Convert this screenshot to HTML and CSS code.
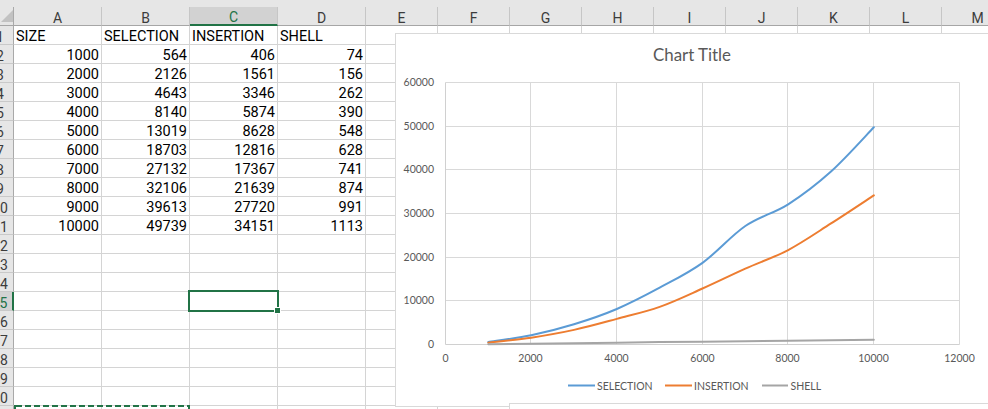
FILE: index.html
```html
<!DOCTYPE html>
<html>
<head>
<meta charset="utf-8">
<link rel="stylesheet" href="styles.css">
</head>
<body>
<div class="app">
  <div class="strip"></div>
  <div class="sheet">
    <div class="row head"><span class="rh corner"><svg class="corner-tri" width="12" height="12" viewBox="0 0 12 12"><polygon points="12,0 12,12 0,12"/></svg></span><span>A</span><span>B</span><span class="colsel">C</span><span>D</span><span>E</span><span>F</span><span>G</span><span>H</span><span>I</span><span>J</span><span>K</span><span>L</span><span>M</span></div>
    <div class="row"><span class="rh">1</span><span>SIZE</span><span>SELECTION</span><span>INSERTION</span><span>SHELL</span><span></span><span></span><span></span><span></span><span></span><span></span><span></span><span></span><span></span></div>
    <div class="row"><span class="rh">2</span><span class="n">1000</span><span class="n">564</span><span class="n">406</span><span class="n">74</span><span></span><span></span><span></span><span></span><span></span><span></span><span></span><span></span><span></span></div>
    <div class="row"><span class="rh">3</span><span class="n">2000</span><span class="n">2126</span><span class="n">1561</span><span class="n">156</span><span></span><span></span><span></span><span></span><span></span><span></span><span></span><span></span><span></span></div>
    <div class="row"><span class="rh">4</span><span class="n">3000</span><span class="n">4643</span><span class="n">3346</span><span class="n">262</span><span></span><span></span><span></span><span></span><span></span><span></span><span></span><span></span><span></span></div>
    <div class="row"><span class="rh">5</span><span class="n">4000</span><span class="n">8140</span><span class="n">5874</span><span class="n">390</span><span></span><span></span><span></span><span></span><span></span><span></span><span></span><span></span><span></span></div>
    <div class="row"><span class="rh">6</span><span class="n">5000</span><span class="n">13019</span><span class="n">8628</span><span class="n">548</span><span></span><span></span><span></span><span></span><span></span><span></span><span></span><span></span><span></span></div>
    <div class="row"><span class="rh">7</span><span class="n">6000</span><span class="n">18703</span><span class="n">12816</span><span class="n">628</span><span></span><span></span><span></span><span></span><span></span><span></span><span></span><span></span><span></span></div>
    <div class="row"><span class="rh">8</span><span class="n">7000</span><span class="n">27132</span><span class="n">17367</span><span class="n">741</span><span></span><span></span><span></span><span></span><span></span><span></span><span></span><span></span><span></span></div>
    <div class="row"><span class="rh">9</span><span class="n">8000</span><span class="n">32106</span><span class="n">21639</span><span class="n">874</span><span></span><span></span><span></span><span></span><span></span><span></span><span></span><span></span><span></span></div>
    <div class="row"><span class="rh">10</span><span class="n">9000</span><span class="n">39613</span><span class="n">27720</span><span class="n">991</span><span></span><span></span><span></span><span></span><span></span><span></span><span></span><span></span><span></span></div>
    <div class="row"><span class="rh">11</span><span class="n">10000</span><span class="n">49739</span><span class="n">34151</span><span class="n">1113</span><span></span><span></span><span></span><span></span><span></span><span></span><span></span><span></span><span></span></div>
    <div class="row"><span class="rh">12</span><span></span><span></span><span></span><span></span><span></span><span></span><span></span><span></span><span></span><span></span><span></span><span></span><span></span></div>
    <div class="row"><span class="rh">13</span><span></span><span></span><span></span><span></span><span></span><span></span><span></span><span></span><span></span><span></span><span></span><span></span><span></span></div>
    <div class="row"><span class="rh">14</span><span></span><span></span><span></span><span></span><span></span><span></span><span></span><span></span><span></span><span></span><span></span><span></span><span></span></div>
    <div class="row"><span class="rh rowsel">15</span><span></span><span></span><span></span><span></span><span></span><span></span><span></span><span></span><span></span><span></span><span></span><span></span><span></span></div>
    <div class="row"><span class="rh">16</span><span></span><span></span><span></span><span></span><span></span><span></span><span></span><span></span><span></span><span></span><span></span><span></span><span></span></div>
    <div class="row"><span class="rh">17</span><span></span><span></span><span></span><span></span><span></span><span></span><span></span><span></span><span></span><span></span><span></span><span></span><span></span></div>
    <div class="row"><span class="rh">18</span><span></span><span></span><span></span><span></span><span></span><span></span><span></span><span></span><span></span><span></span><span></span><span></span><span></span></div>
    <div class="row"><span class="rh">19</span><span></span><span></span><span></span><span></span><span></span><span></span><span></span><span></span><span></span><span></span><span></span><span></span><span></span></div>
    <div class="row"><span class="rh">20</span><span></span><span></span><span></span><span></span><span></span><span></span><span></span><span></span><span></span><span></span><span></span><span></span><span></span></div>
    <div class="row"><span class="rh">21</span><span></span><span></span><span></span><span></span><span></span><span></span><span></span><span></span><span></span><span></span><span></span><span></span><span></span></div>
  </div>

  <div class="cursor"><i class="handle"></i></div>
  <div class="copy"></div>

  <div class="chart">
    <svg class="chart-svg" width="620" height="372" viewBox="0 0 620 372">
      <text class="title" x="296" y="27" text-anchor="middle">Chart Title</text>
      <g class="gridlines">
        <line x1="49.5" x2="563.5" y1="48.5" y2="48.5"/>
        <line x1="49.5" x2="563.5" y1="92.5" y2="92.5"/>
        <line x1="49.5" x2="563.5" y1="135.5" y2="135.5"/>
        <line x1="49.5" x2="563.5" y1="179.5" y2="179.5"/>
        <line x1="49.5" x2="563.5" y1="223.5" y2="223.5"/>
        <line x1="49.5" x2="563.5" y1="266.5" y2="266.5"/>
        <line x1="134.5" x2="134.5" y1="48.5" y2="310.5"/>
        <line x1="220.5" x2="220.5" y1="48.5" y2="310.5"/>
        <line x1="306.5" x2="306.5" y1="48.5" y2="310.5"/>
        <line x1="391.5" x2="391.5" y1="48.5" y2="310.5"/>
        <line x1="477.5" x2="477.5" y1="48.5" y2="310.5"/>
        <line x1="563.5" x2="563.5" y1="48.5" y2="310.5"/>
      </g>
      <g class="axes">
        <line x1="49.5" x2="49.5" y1="48.5" y2="310.5"/>
        <line x1="49.5" x2="563.5" y1="310.5" y2="310.5"/>
      </g>
      <g class="ylabels" text-anchor="end">
        <text x="38" y="52.3">60000</text>
        <text x="38" y="96.3">50000</text>
        <text x="38" y="139.3">40000</text>
        <text x="38" y="183.3">30000</text>
        <text x="38" y="227.3">20000</text>
        <text x="38" y="270.3">10000</text>
        <text x="38" y="314.3">0</text>
      </g>
      <g class="xlabels" text-anchor="middle">
        <text x="49.5" y="328">0</text>
        <text x="134.5" y="328">2000</text>
        <text x="220.5" y="328">4000</text>
        <text x="306.5" y="328">6000</text>
        <text x="391.5" y="328">8000</text>
        <text x="477.5" y="328">10000</text>
        <text x="563.5" y="328">12000</text>
      </g>
      <svg x="49.5" y="48.5" width="514" height="262" viewBox="0 0 12000 60000" preserveAspectRatio="none" overflow="visible">
        <g transform="matrix(1 0 0 -1 0 60000)">
          <path class="s-sel" vector-effect="non-scaling-stroke" d="M1000 564 C1166.67 824.33 1666.67 1446.17 2000 2126 C2333.33 2805.83 2666.67 3640.67 3000 4643 C3333.33 5645.33 3666.67 6744 4000 8140 C4333.33 9536 4666.67 11258.5 5000 13019 C5333.33 14779.5 5666.67 16350.83 6000 18703 C6333.33 21055.17 6666.67 24898.17 7000 27132 C7333.33 29365.83 7666.67 30025.83 8000 32106 C8333.33 34186.17 8666.67 36674.17 9000 39613 C9333.33 42551.83 9833.33 48051.33 10000 49739"/>
          <path class="s-ins" vector-effect="non-scaling-stroke" d="M1000 406 C1166.67 598.5 1666.67 1071 2000 1561 C2333.33 2051 2666.67 2627.17 3000 3346 C3333.33 4064.83 3666.67 4993.67 4000 5874 C4333.33 6754.33 4666.67 7471 5000 8628 C5333.33 9785 5666.67 11359.5 6000 12816 C6333.33 14272.5 6666.67 15896.5 7000 17367 C7333.33 18837.5 7666.67 19913.5 8000 21639 C8333.33 23364.5 8666.67 25634.67 9000 27720 C9333.33 29805.33 9833.33 33079.17 10000 34151"/>
          <path class="s-shl" vector-effect="non-scaling-stroke" d="M1000 74 L2000 156 L3000 262 L4000 390 L5000 548 L6000 628 L7000 741 L8000 874 L9000 991 L10000 1113"/>
        </g>
      </svg>
      <g class="legend">
        <line class="s-sel" x1="172" x2="199" y1="351.5" y2="351.5"/>
        <text x="201" y="355.5">SELECTION</text>
        <line class="s-ins" x1="269" x2="296" y1="351.5" y2="351.5"/>
        <text x="298" y="355.5">INSERTION</text>
        <line class="s-shl" x1="366" x2="392" y1="351.5" y2="351.5"/>
        <text x="394.5" y="355.5">SHELL</text>
      </g>
    </svg>
  </div>
  <div class="chart2"></div>
</div>
</body>
</html>
```

FILE: styles.css
```css
html, body {
  margin: 0;
  padding: 0;
}
body {
  width: 988px;
  height: 409px;
  overflow: hidden;
  background: #ffffff;
  font-family: Roboto, "Liberation Sans", sans-serif;
}
.app {
  position: relative;
  width: 988px;
  height: 409px;
  overflow: hidden;
}
.strip {
  height: 7px;
  background: #e6e6e6;
}
.sheet {
  margin-left: -13px;
  width: 1100px;
}
.row {
  display: grid;
  grid-template-columns: 27px repeat(4, 88px) repeat(9, 72px);
  height: 19px;
}
.row > span {
  box-sizing: border-box;
  height: 19px;
  border-right: 1px solid #d4d4d4;
  border-bottom: 1px solid #d4d4d4;
  display: flex;
  align-items: flex-end;
  padding: 0 2px 0 2px;
  font-size: 14.5px;
  line-height: 14px;
  color: #000;
  white-space: nowrap;
  overflow: hidden;
}
.row > span.n {
  justify-content: flex-end;
}
.row > span.rh {
  background: #e6e6e6;
  border-right: 1px solid #a9a9a9;
  border-bottom: 1px solid #c9c9c9;
  justify-content: center;
  color: #3c3c3c;
  font-size: 14px;
  padding: 0;
}
.row > span.rowsel {
  background: #d2d2d2;
  border-right: 2px solid #217346;
  color: #217346;
}
.head > span {
  background: #e6e6e6;
  border-right: 1px solid #c6c6c6;
  border-bottom: 1px solid #a6a6a6;
  justify-content: center;
  color: #3c3c3c;
  font-size: 14px;
  padding: 0;
}
.head > span.colsel {
  background: #d2d2d2;
  border-bottom: 2px solid #217346;
  color: #217346;
}
.head > span.corner {
  justify-content: flex-end;
  padding: 0 0 3px 0;
  border-bottom: 1px solid #a6a6a6;
  border-right: 1px solid #a9a9a9;
}
.corner-tri {
  display: block;
  flex: none;
}
.corner-tri polygon {
  fill: #c2c2c2;
}

.cursor {
  position: absolute;
  left: 188px;
  top: 290px;
  width: 91px;
  height: 22px;
  box-sizing: border-box;
  border: 2px solid #217346;
}
.handle {
  position: absolute;
  right: -4px;
  bottom: -4px;
  width: 5px;
  height: 5px;
  background: #217346;
  border: 1px solid #ffffff;
}
.copy {
  position: absolute;
  left: 14px;
  top: 405px;
  width: 176px;
  height: 10px;
  box-sizing: border-box;
  border-left: 2px solid #217346;
  border-right: 2px solid #217346;
  background: repeating-linear-gradient(90deg, #217346 0 6px, transparent 6px 9px) top left / 100% 2px no-repeat;
}

.chart {
  position: absolute;
  left: 395px;
  top: 33px;
  width: 622px;
  height: 374px;
  box-sizing: border-box;
  border: 1px solid #d9d9d9;
  background: #ffffff;
}
.chart-svg {
  display: block;
}
.chart-svg text {
  font-family: Lato, "Open Sans", sans-serif;
  fill: #595959;
}
.chart-svg .title {
  font-size: 16.9px;
}
.gridlines line {
  stroke: #d9d9d9;
  stroke-width: 1;
}
.axes line {
  stroke: #d0d0d0;
  stroke-width: 1;
}
.ylabels text, .xlabels text, .legend text {
  font-size: 10.5px;
}
.s-sel, .s-ins, .s-shl {
  fill: none;
  stroke-width: 2;
  stroke-linecap: round;
}
.s-sel { stroke: #5b9bd5; }
.s-ins { stroke: #ed7d31; }
.s-shl { stroke: #a5a5a5; }
.legend line {
  stroke-linecap: butt;
}
.chart2 {
  position: absolute;
  left: 509px;
  top: 403px;
  width: 520px;
  height: 20px;
  box-sizing: border-box;
  border-top: 1px solid #d9d9d9;
  border-left: 1px solid #d9d9d9;
  background: #ffffff;
}
```
